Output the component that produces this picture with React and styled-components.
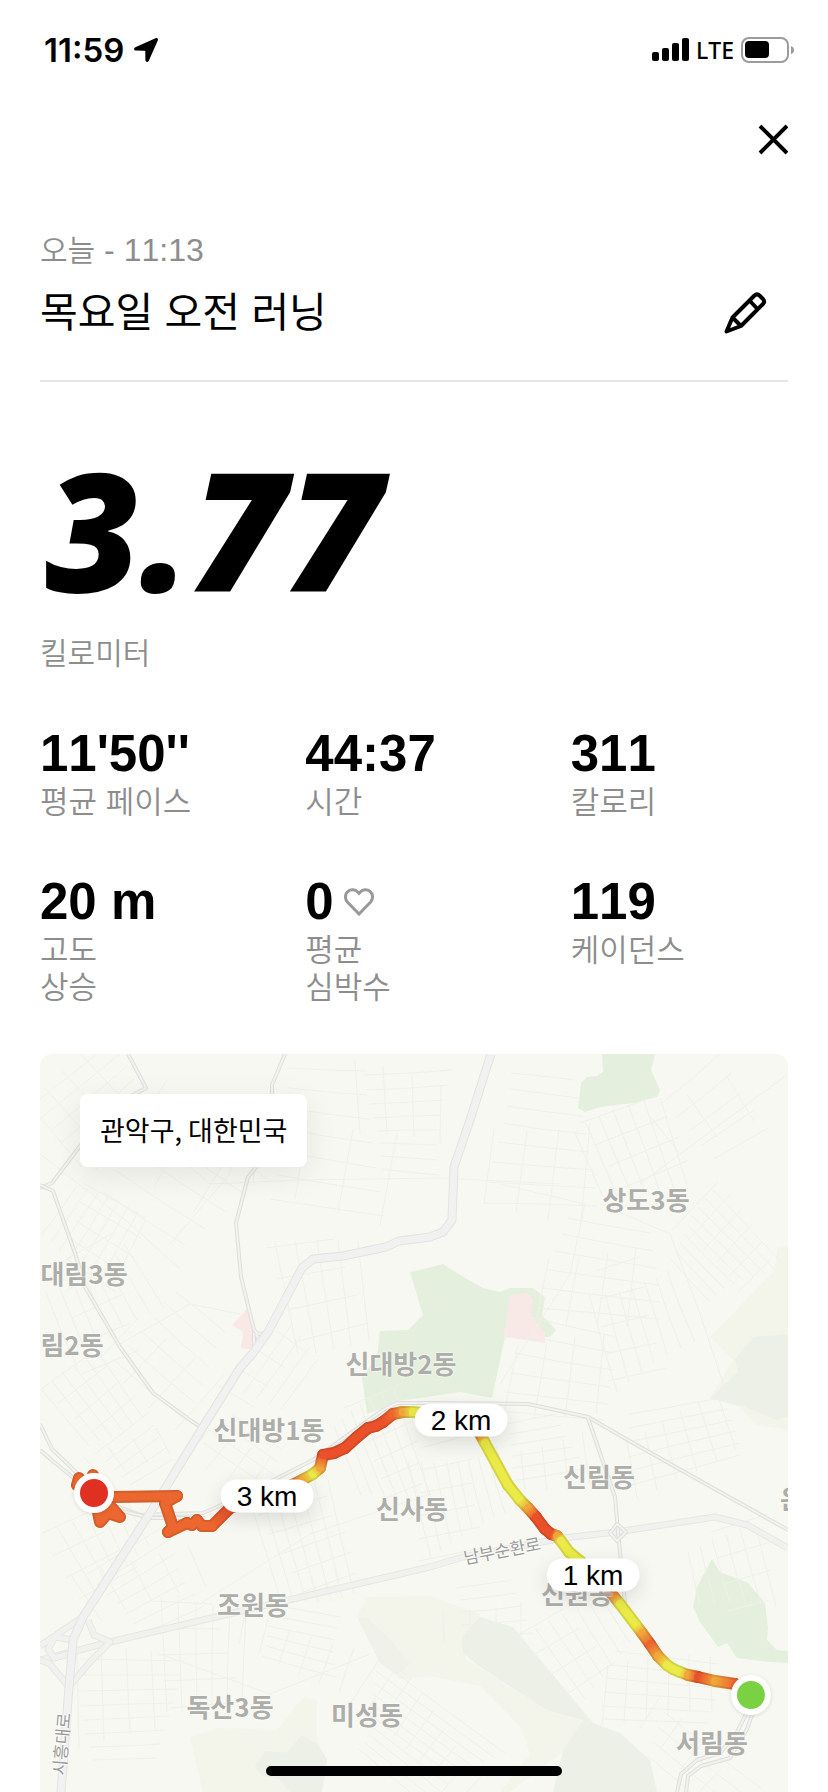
import styled, { createGlobalStyle } from "styled-components";

const stats = [
  { value: "11'50''", label: ["평균 페이스"] },
  { value: "44:37", label: ["시간"] },
  { value: "311", label: ["칼로리"] },
  { value: "20 m", label: ["고도", "상승"] },
  { value: "0", label: ["평균", "심박수"], heart: true },
  { value: "119", label: ["케이던스"] },
];

// the map is drawn on a 748 x 738 canvas, every place below uses it
const MAP_W = 748;
const MAP_H = 738;

const places = [
  { name: "대림3동", x: 44, y: 219 },
  { name: "림2동", x: 32, y: 290 },
  { name: "신대방2동", x: 361, y: 309 },
  { name: "신대방1동", x: 229, y: 375 },
  { name: "상도3동", x: 606, y: 145 },
  { name: "신림동", x: 559, y: 422 },
  { name: "신사동", x: 372, y: 454 },
  { name: "신원동", x: 537, y: 539 },
  { name: "조원동", x: 213, y: 550 },
  { name: "독산3동", x: 190, y: 652 },
  { name: "미성동", x: 327, y: 660 },
  { name: "서림동", x: 672, y: 688 },
  { name: "은", x: 752, y: 444 },
];

const roadNames = [
  { name: "남부순환로", x: 462, y: 496, angle: -11 },
  { name: "시흥대로", x: 21, y: 690, angle: -85 },
];

const splits = [
  { name: "1 km", x: 553, y: 521 },
  { name: "2 km", x: 421, y: 366 },
  { name: "3 km", x: 227, y: 442 },
];

const O = "#ec672f";
const R = "#ea5029";
const Y = "#eaea48";
const A = "#f0a63a";

const route = [
  [54, 439, O], [73, 443, O], [137, 442, O], [125, 449, O], [133, 473, O],
  [128, 478, O], [147, 469, O], [152, 471, O], [157, 466, O], [162, 472, O],
  [172, 472, O], [190, 454, R], [225, 442, R], [252, 431, O], [262, 426, A],
  [273, 420, Y], [280, 414, A], [283, 401, R], [294, 399, R], [305, 394, R],
  [317, 383, R], [328, 374, R], [336, 372, R], [343, 368, R], [353, 360, O],
  [363, 358, A], [373, 358, Y], [405, 362, Y], [430, 366, O], [439, 378, O],
  [445, 389, Y], [457, 411, Y], [468, 431, Y], [480, 446, Y], [488, 454, A],
  [496, 463, R], [505, 475, R], [511, 480, R], [517, 482, A], [521, 487, Y],
  [529, 498, Y], [540, 507, Y], [555, 521, A], [570, 538, O], [580, 550, Y],
  [596, 571, Y], [602, 579, A], [610, 590, O], [618, 602, A], [627, 611, Y],
  [633, 615, Y], [640, 618, Y], [648, 621, A], [658, 623, R], [675, 627, A],
  [695, 630, O], [711, 641, O],
];

const knot = "M54 439 L37 431 L39 424 M54 439 L53 421 M54 439 L60 468 L68 459 L80 463 L72 454 Z";

const streets = [
  "M451 0 L430 66 L414 113 L412 166 L403 178 L390 183 L359 187 L346 193 L303 202 L273 205 L262 214 L228 278 L213 299 L200 314 L163 373 L110 459 L43 563 L33 586 L29 633 L21 738",
];

const avenues = [
  "M0 606 L70 588 L197 558 L390 513 L423 503 L523 484 L577 478 L675 463 L707 471 L748 494",
  "M0 592 L22 577 L43 563 M48 566 L54 581 L70 588 L50 608 L29 633 L10 610 L0 606 M33 586 L15 583 L8 595 L14 604 L29 600",
];

const lanes = [
  "M0 134 L12 129 L40 92 L75 50 L106 34 L88 0",
  "M0 131 L13 137 L35 199 L45 233 L80 293 L113 339 L150 366 L162 374",
  "M245 0 L232 31 L232 60 L218 111 L208 123 L196 169 L201 223 L214 276 L214 299",
  "M214 276 L218 280 L228 279 M216 280 L221 290",
  "M0 370 L12 395 L38 420 L70 450 L100 461 L163 459 L200 443 L273 406 L343 356 L357 349 L390 349 L488 350 L548 363 L593 389 L673 434 L748 476",
  "M0 396 L14 408 L36 426 M75 455 L110 464 L165 464",
  "M548 364 L575 443 L578 478 L585 549",
  "M577 470 L586 478 L577 487 L570 479 Z",
  "M707 658 L697 678 L680 699 L657 706 L641 720 L637 738",
  "M713 658 L707 675 L690 704 L661 712 L648 722 L646 738",
];

const hoods = [
  [60, 55, 100, 90, -38, 14], [60, 250, 110, 110, 62, 15], [55, 180, 80, 80, -60, 11],
  [140, 130, 130, 120, 40, 26], [285, 90, 140, 150, 3, 24], [280, 240, 110, 80, 80, 18],
  [370, 70, 100, 110, 2, 15], [500, 90, 110, 130, 1, 18], [590, 100, 90, 90, 72, 14],
  [680, 60, 110, 100, -34, 22], [560, 220, 120, 90, 5, 17], [680, 200, 100, 80, 48, 10],
  [600, 270, 130, 90, 70, 15], [520, 320, 100, 90, 8, 17], [240, 310, 100, 60, -50, 14],
  [130, 300, 110, 100, 35, 19], [50, 350, 80, 70, 55, 12], [100, 400, 90, 60, -33, 13],
  [200, 400, 90, 50, 30, 13], [340, 400, 110, 70, 72, 11], [420, 440, 110, 100, 74, 12],
  [640, 390, 110, 70, -14, 12], [690, 520, 90, 80, 80, 15], [500, 400, 90, 70, -14, 12],
  [260, 490, 120, 80, 76, 12], [110, 530, 120, 90, -28, 15], [60, 490, 80, 80, 58, 14],
  [90, 660, 100, 110, 2, 14], [260, 590, 120, 70, 12, 12], [160, 600, 110, 80, 88, 15],
  [380, 690, 160, 90, 38, 10], [450, 560, 100, 60, -10, 14], [620, 640, 110, 70, 5, 12],
  [660, 720, 150, 60, 42, 16], [540, 590, 90, 80, 52, 14],
];

// loose street grid for one neighbourhood
function gridPath([cx, cy, w, h, angle, step], seed) {
  const a = (angle * Math.PI) / 180;
  const at = (u, v) =>
    `${Math.round(cx + u * Math.cos(a) - v * Math.sin(a))} ${Math.round(cy + u * Math.sin(a) + v * Math.cos(a))}`;
  const wobble = (n) => Math.sin((n + seed * 7) * 12.9) * 0.5;
  let d = "";
  for (let v = -h / 2, i = 0; v <= h / 2; v += step, i++) {
    const j = wobble(i) * step;
    d += `M${at((-w / 2) * (0.8 + wobble(i + 3) * 0.5), v + j)} L${at(0, v + j / 2)} L${at((w / 2) * (0.8 + wobble(i + 5) * 0.5), v)} `;
  }
  for (let u = -w / 2, i = 0; u <= w / 2; u += step * 1.8, i++) {
    const j = wobble(i + 11) * step;
    d += `M${at(u + j, (-h / 2) * (0.7 + wobble(i + 2)))} L${at(u, (h / 2) * (0.7 + wobble(i + 9)))} `;
  }
  return d;
}

function Road({ d, width, edge, fill }) {
  return (
    <g fill="none" strokeLinejoin="round">
      <path d={d} stroke={edge} strokeWidth={width} />
      <path d={d} stroke={fill} strokeWidth={width - 2} />
    </g>
  );
}

function MapDrawing() {
  const legs = route.slice(1).map((end, i) => [route[i], end]);
  return (
    <Drawing viewBox={`0 0 ${MAP_W} ${MAP_H}`} aria-hidden="true">
      <g fill="#f3f4ea">
        <path d="M748 193 L737 194 L735 216 L703 249 L670 283 L693 306 L670 344 L700 353 L715 370 L748 376 Z" />
        <path d="M150 683 L177 674 L237 676 L263 643 L277 646 L277 686 L287 706 L280 738 L163 738 Z" />
        <path d="M317 563 L327 543 L390 542 L440 560 L425 605 L507 656 L543 666 L520 700 L470 738 L460 738 L490 700 L480 672 L440 632 L390 622 L360 625 L340 609 Z" />
      </g>
      <g fill="#edf0e7">
        <path d="M748 280 L714 283 L695 305 L698 318 L670 344 L705 353 L737 366 L748 362 Z" />
        <path d="M422 583 L440 563 L473 573 L523 633 L553 669 L580 679 L610 706 L617 738 L513 738 L523 696 L543 666 L507 656 L440 613 L423 599 Z" />
        <path d="M215 712 L226 697 L247 699 L262 681 L277 690 L287 706 L282 738 L250 738 L240 725 L222 722 Z" />
        <path d="M317 563 L327 564 L350 585 L370 610 L358 620 L340 609 Z" opacity="0.5" />
      </g>
      <g fill="#e5efdd">
        <path d="M562 0 L563 18 L557 22 L547 23 L541 29 L538 54 L545 58 L560 53 L593 49 L617 43 L620 36 L611 16 L615 0 Z" />
        <path d="M370 218 L383 261 L368 276 L340 277 L337 303 L322 323 L327 360 L340 355 L357 347 L380 344 L420 338 L452 344 L465 283 L505 283 L510 283 L516 276 L502 261 L505 243 L493 234 L470 234 L460 238 L443 234 L420 221 L403 210 L380 216 Z" />
        <path d="M672 505 L680 518 L708 529 L725 549 L728 574 L727 586 L737 596 L748 597 L748 609 L730 608 L697 604 L687 589 L678 593 L660 568 L653 553 L657 533 Z" />
      </g>
      <g fill="#f9e9e6">
        <path d="M470 241 L488 239 L493 246 L491 263 L505 278 L505 289 L464 283 Z" />
        <path d="M207 255 L214 279 L213 296 L201 294 L203 278 L192 271 Z" />
      </g>
      <g fill="none" stroke="#eff0ea" strokeWidth="1">
        {hoods.map((hood, i) => (
          <path key={i} d={gridPath(hood, i)} />
        ))}
        <path d="M0 100 L90 170 L140 215 M90 60 L170 130 L260 126 L400 124 L520 130 M600 130 L748 20 M130 190 L190 120 L200 60 M460 130 L545 150 L530 220 L460 330 M560 150 L630 180 L660 260 L690 350 M80 290 L150 250 L200 260 M160 550 L270 480 L390 440 M120 600 L230 640 L330 600" />
      </g>
      {avenues.map((d) => (
        <Road key={d} d={d} width={7} edge="#e6e7e2" fill="#f1f2f0" />
      ))}
      {lanes.map((d) => (
        <Road key={d} d={d} width={4} edge="#dedfda" fill="#f2f2f1" />
      ))}
      {streets.map((d) => (
        <Road key={d} d={d} width={9} edge="#e3e4df" fill="#f1f1f1" />
      ))}
      <defs>
        {legs.map(([from, to], i) => (
          <linearGradient key={i} id={`leg${i}`} gradientUnits="userSpaceOnUse" x1={from[0]} y1={from[1]} x2={to[0]} y2={to[1] + 0.1}>
            <stop offset="0" stopColor={from[2]} />
            <stop offset="1" stopColor={to[2]} />
          </linearGradient>
        ))}
      </defs>
      <g fill="none" strokeLinecap="round" strokeLinejoin="round">
        {[12, 8].map((width) => (
          <g key={width} strokeWidth={width} filter={width === 12 ? "brightness(0.9)" : undefined}>
            <path d={knot} stroke={O} />
            {legs.map(([from, to], i) => (
              <path key={i} d={`M${from[0]} ${from[1]} L${to[0]} ${to[1]}`} stroke={`url(#leg${i})`} />
            ))}
          </g>
        ))}
      </g>
    </Drawing>
  );
}

function StatusBar() {
  return (
    <Status>
      <StatusGroup $gap="9px">
        <Clock>11:59</Clock>
        <svg width="26" height="26" viewBox="0 0 26 26" aria-hidden="true">
          <path d="M22.5 1.2 C24.300 0.500 25.500 1.700 24.800 3.500 L15.800 23.700 C14.900 25.600 12.400 25.200 12.400 23.100 L12.300 14.300 Q12.300 13.700 11.700 13.700 L2.900 13.600 C0.800 13.600 0.400 11.100 2.300 10.200 Z" />
        </svg>
      </StatusGroup>
      <StatusGroup $gap="7px">
        <svg width="37" height="24" viewBox="0 0 37 24" aria-hidden="true">
          <rect x="0" y="14" width="7" height="9" rx="2" />
          <rect x="10" y="10" width="7" height="13" rx="2" />
          <rect x="20" y="5" width="7" height="18" rx="2" />
          <rect x="30" y="0" width="7" height="23" rx="2" />
        </svg>
        <Carrier>LTE</Carrier>
        <svg width="54" height="26" viewBox="0 0 54 26" aria-hidden="true">
          <rect x="1" y="1" width="46" height="24" rx="7" fill="none" stroke="#9c9c9c" strokeWidth="2" />
          <rect x="4" y="4" width="24" height="17" rx="4" />
          <path d="M50 9 Q53 10 53 13 Q53 16 50 17 Z" fill="#9c9c9c" />
        </svg>
      </StatusGroup>
    </Status>
  );
}

function Stat({ value, label, heart }) {
  return (
    <StatItem>
      <StatValue>
        {value}
        {heart && (
          <svg width="30" height="28" viewBox="0 0 30 28" aria-hidden="true">
            <path
              d="M15 26 L3.600 14.200 C0.600 11 0.800 6.300 3.700 3.600 C6.700 0.900 11.300 1.200 14 4.200 L15 5.300 L16 4.200 C18.700 1.200 23.300 0.900 26.300 3.600 C29.200 6.300 29.400 11 26.400 14.200 Z"
              fill="none"
              stroke="#999999"
              strokeWidth="3"
            />
          </svg>
        )}
      </StatValue>
      <StatLabel>
        {label.map((line) => (
          <span key={line}>{line}</span>
        ))}
      </StatLabel>
    </StatItem>
  );
}

function App() {
  return (
    <Page>
      <GlobalStyle />
      <StatusBar />
      <TopBar>
        <IconButton type="button" aria-label="닫기">
          <svg width="32" height="32" viewBox="0 0 32 32" fill="none" stroke="#000" strokeWidth="4">
            <path d="M4 3 L31 30 M31 3 L4 30" />
          </svg>
        </IconButton>
      </TopBar>
      <Content>
        <RunHeader>
          <RunDate>
            오늘<time> - 11:13</time>
          </RunDate>
          <TitleRow>
            <Title>목요일 오전 러닝</Title>
            <IconButton type="button" aria-label="이름 수정">
              <svg width="44" height="44" viewBox="0 0 44 44" fill="none" stroke="#000" strokeWidth="4" strokeLinejoin="round">
                <path d="M3.500 40.500 L9.500 26.500 L31.500 4.500 Q34 2.200 36.500 4.500 L40 8 Q42.200 10.500 40 13 L18 35 Z" />
                <path d="M26.500 9.500 L34.500 18 M9.500 26.500 L18 35" />
              </svg>
            </IconButton>
          </TitleRow>
        </RunHeader>
        <Distance>3.77</Distance>
        <Unit>킬로미터</Unit>
        <Stats>
          {stats.map((stat) => (
            <Stat key={stat.value} {...stat} />
          ))}
        </Stats>
        <MapCard>
          <MapDrawing />
          {places.map((place) => (
            <Place key={place.name} $x={place.x} $y={place.y}>
              {place.name}
            </Place>
          ))}
          {roadNames.map((road) => (
            <RoadName key={road.name} $x={road.x} $y={road.y} $angle={road.angle}>
              {road.name}
            </RoadName>
          ))}
          <Marker $x={711} $y={641} $color="#7ad142" />
          <Marker $x={54} $y={439} $color="#df3022" />
          {splits.map((split) => (
            <Split key={split.name} $x={split.x} $y={split.y}>
              {split.name}
            </Split>
          ))}
          <LocationTag>관악구, 대한민국</LocationTag>
        </MapCard>
      </Content>
      <HomeIndicator />
    </Page>
  );
}

export default App;

const GlobalStyle = createGlobalStyle`
  * {
    box-sizing: border-box;
  }

  body {
    margin: 0;
    background: #ffffff;
    color: #000000;
    font-family: "Liberation Sans", "Noto Sans CJK KR", sans-serif;
    font-kerning: none;
  }
`;

const Page = styled.div`
  display: flex;
  flex-direction: column;
`;

const Status = styled.div`
  display: flex;
  justify-content: space-between;
  align-items: center;
  height: 100px;
  padding: 0 33px 0 44px;
`;

const StatusGroup = styled.div`
  display: flex;
  align-items: center;
  gap: ${(props) => props.$gap};
`;

const Clock = styled.span`
  font-family: Inter, sans-serif;
  font-size: 33px;
  font-weight: 600;
  line-height: 40px;
`;

const Carrier = styled.span`
  font-family: "Noto Sans", sans-serif;
  font-size: 23px;
  font-weight: 500;
  line-height: 32px;
`;

const TopBar = styled.header`
  display: flex;
  justify-content: flex-end;
  align-items: center;
  height: 78px;
  padding: 0 40px;
`;

const IconButton = styled.button`
  display: flex;
  padding: 0;
  border: 0;
  background: none;
  cursor: pointer;
`;

const Content = styled.main`
  display: flex;
  flex-direction: column;
  padding: 52px 40px 0;
`;

const RunHeader = styled.section`
  display: flex;
  flex-direction: column;
  gap: 12px;
  padding-bottom: 37px;
  border-bottom: 2px solid #e5e5e5;
`;

const RunDate = styled.p`
  margin: 0;
  font-size: 30px;
  font-weight: 350;
  line-height: 40px;
  color: #8d8d8d;

  time {
    font-size: 32px;
  }
`;

const TitleRow = styled.div`
  display: flex;
  justify-content: space-between;
  align-items: center;
  padding-right: 21px;
`;

const Title = styled.h1`
  margin: 0;
  font-size: 41px;
  font-weight: 400;
  line-height: 60px;
`;

const Distance = styled.div`
  margin-top: 58px;
  padding-left: 5px;
  font-family: "Open Sans", sans-serif;
  font-size: 165px;
  font-style: italic;
  font-weight: 800;
  line-height: 176px;
`;

const Unit = styled.div`
  margin-top: 20px;
  font-size: 30px;
  font-weight: 350;
  line-height: 36px;
  color: #8d8d8d;
`;

const Stats = styled.section`
  display: grid;
  grid-template-columns: repeat(3, 1fr);
  gap: 51px 48px;
  margin-top: 52px;
`;

const StatItem = styled.div`
  display: flex;
  flex-direction: column;
`;

const StatValue = styled.div`
  display: flex;
  align-items: center;
  gap: 10px;
  font-size: 51px;
  font-weight: 700;
  line-height: 60px;
`;

const StatLabel = styled.div`
  display: flex;
  flex-direction: column;
  font-size: 31px;
  font-weight: 350;
  line-height: 37px;
  color: #8d8d8d;
`;

const MapCard = styled.section`
  position: relative;
  margin-top: 48px;
  border-radius: 12px 12px 0 0;
  background: #f7f8f2;
  overflow: hidden;
`;

const Drawing = styled.svg`
  display: block;
  width: 100%;
  height: auto;
`;

const Pin = styled.div`
  position: absolute;
  left: ${(props) => (props.$x / MAP_W) * 100}%;
  top: ${(props) => (props.$y / MAP_H) * 100}%;
  transform: translate(-50%, -50%) rotate(${(props) => props.$angle || 0}deg);
  white-space: nowrap;
`;

const Place = styled(Pin)`
  font-family: "Noto Sans CJK KR", sans-serif;
  font-size: 26px;
  font-weight: 700;
  line-height: 32px;
  color: #adada9;
  text-shadow: 0 0 2px #ffffff, 0 0 2px #ffffff;
`;

const RoadName = styled(Pin)`
  font-family: "Noto Sans CJK KR", sans-serif;
  font-size: 17px;
  line-height: 20px;
  color: #9a9a98;
  text-shadow: 0 0 2px #ffffff, 0 0 2px #ffffff, 0 0 2px #ffffff;
`;

const Marker = styled(Pin)`
  width: 40px;
  height: 40px;
  border: 6px solid #ffffff;
  border-radius: 50%;
  background: ${(props) => props.$color};
  box-shadow: 0 1px 4px rgba(0, 0, 0, 0.12);
`;

const Split = styled(Pin)`
  padding: 0 16px;
  border-radius: 17px;
  background: #ffffff;
  box-shadow: 0 6px 20px rgba(0, 0, 0, 0.12);
  font-size: 28px;
  line-height: 33px;
`;

const LocationTag = styled.div`
  position: absolute;
  top: 40px;
  left: 40px;
  padding: 18px 20px 19px;
  border-radius: 8px;
  background: #ffffff;
  box-shadow: 0 8px 32px rgba(0, 0, 0, 0.08);
  font-family: "Noto Sans CJK KR", sans-serif;
  font-size: 27px;
  line-height: 36px;
`;

const HomeIndicator = styled.div`
  position: fixed;
  bottom: 16px;
  left: 50%;
  width: 296px;
  height: 10px;
  margin-left: -148px;
  border-radius: 5px;
  background: #000000;
`;
